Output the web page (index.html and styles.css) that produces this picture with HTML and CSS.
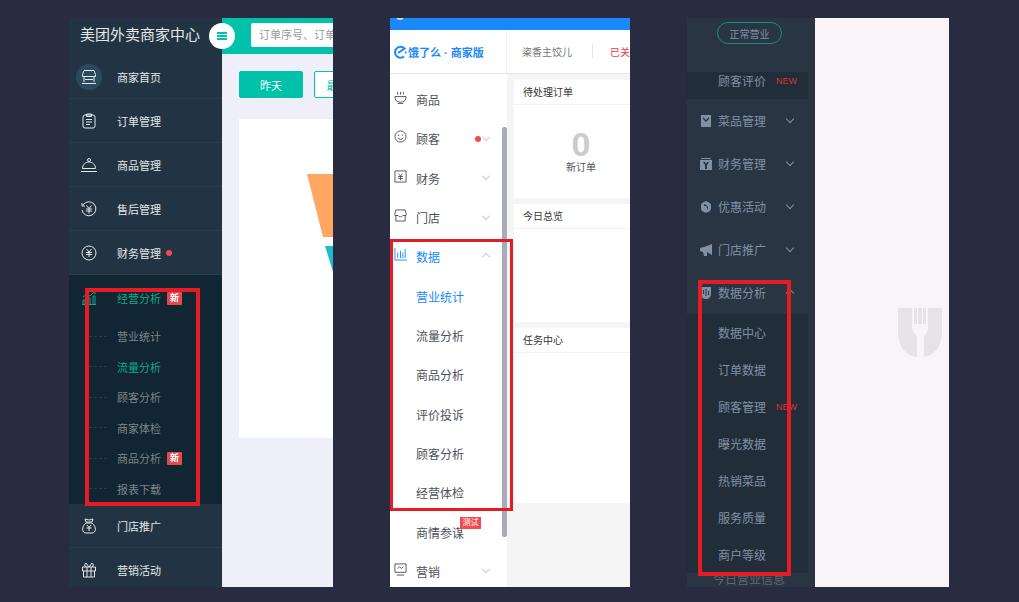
FILE: index.html
```
<!DOCTYPE html>
<html lang="zh-CN">
<head>
  <meta charset="UTF-8">
  <title>商家后台对比</title>
  <meta name="viewport" content="width=device-width, initial-scale=1.0">
  <link rel="stylesheet" href="styles.css">
</head>
<body>
  <!-- 美团 -->
  <section class="panel meituan">
    <aside class="mt-side">
      <h2>美团外卖商家中心</h2>
      <ul class="mt-menu">
        <li><a href="#"><span class="icon home"><svg viewBox="0 0 16 16"><path d="M3 1.500h10l1.500 4v2h-13v-2zM3 8v5M13 8v5M1 14.500h14M4 10.500h8"/></svg></span>商家首页</a></li>
        <li><a href="#"><span class="icon"><svg viewBox="0 0 16 16"><rect x="2" y="2" width="12" height="13" rx="2"/><path d="M5.500 1v2.500h5V1zM5 6.500h6M5 9h6M5 11.500h4"/></svg></span>订单管理</a></li>
        <li><a href="#"><span class="icon"><svg viewBox="0 0 16 16"><path d="M1.500 11.500c0-4 3-6.500 6.500-6.500s6.500 2.500 6.500 6.500zM0 14.500h16"/><circle cx="8" cy="3" r="1.500"/></svg></span>商品管理</a></li>
        <li><a href="#"><span class="icon"><svg viewBox="0 0 16 16"><path d="M2 4a7 7 0 1 1-1 5M1 2v3h3M5.500 4.500L8 7.500l2.500-3M5 8h6M5 10h6M8 7.500v5"/></svg></span>售后管理</a></li>
        <li><a href="#"><span class="icon"><svg viewBox="0 0 16 16"><circle cx="8" cy="8" r="7"/><path d="M5.500 4L8 7l2.500-3M5 7.500h6M5 9.500h6M8 7v5"/></svg></span>财务管理<i class="dot"></i></a></li>
        <li class="open">
          <a href="#" class="current"><span class="icon"><svg viewBox="0 0 16 16"><path d="M2 14v-4h2v4M7 14V8h2v6M12 14V6h2v8M1 14.500h14M2 7l4-3 3 2 4-4M10 1.500h4v3"/></svg></span>经营分析<b class="new">新</b></a>
          <ul class="mt-sub">
            <li><a href="#">营业统计</a></li>
            <li><a href="#" class="current">流量分析</a></li>
            <li><a href="#">顾客分析</a></li>
            <li><a href="#">商家体检</a></li>
            <li><a href="#">商品分析<b class="new">新</b></a></li>
            <li><a href="#">报表下载</a></li>
          </ul>
        </li>
        <li><a href="#"><span class="icon"><svg viewBox="0 0 16 16"><path d="M5 4L4 1l4 1 4-1-1 3zM5 5C0 9 1 15 5 15h6c4 0 5-6 0-10zM6 7l2 2.500L10 7M5.500 10h5M8 9.500V13"/></svg></span>门店推广</a></li>
        <li><a href="#"><span class="icon"><svg viewBox="0 0 16 16"><path d="M1.500 5h13v4h-13zM2.500 9v6h11V9M6 5v10M10 5v10M8 5L5 1 3.500 3 5 5M8 5l3-4 1.500 2L11 5"/></svg></span>营销活动</a></li>
      </ul>
    </aside>
    <div class="mt-main">
      <header>
        <button class="fold" aria-label="收起菜单"><svg viewBox="0 0 10 10"><path d="M0 2h10M0 5h10M0 8h10"/></svg></button>
        <input type="text" placeholder="订单序号、订单" aria-label="搜索订单">
      </header>
      <div class="days">
        <button class="active">昨天</button>
        <button>最近7天</button>
      </div>
      <div class="chart">
        <svg viewBox="0 0 94 319"><path fill="#ffa661" d="M68 55h26v63H84z"/><path fill="#20bccb" d="M86 127h8v26z"/></svg>
      </div>
    </div>
    <div class="mark"></div>
  </section>

  <!-- 饿了么 -->
  <section class="panel eleme">
    <div class="el-bar"><i></i></div>
    <header class="el-head">
      <h2><svg viewBox="0 0 14 14"><path d="M11 11.500A5.500 5.500 0 1 1 11.500 3.500L5 8"/><path d="M12 7.500h1.500"/></svg>饿了么 · 商家版</h2>
      <div class="shop"><span>粢香主饺儿</span><span class="state">已关</span></div>
    </header>
    <div class="el-body">
      <nav>
        <ul>
          <li><a href="#"><svg viewBox="0 0 14 14"><path d="M1 6h12c0 4-2 6-6 6S1 10 1 6zM4 1v3M7 1v3M10 1v3M4 13.500h6"/></svg>商品</a></li>
          <li><a href="#"><svg viewBox="0 0 14 14"><circle cx="7" cy="7" r="6"/><path d="M5 5v1.500M9 5v1.500M4 8.500c1.500 2 4.500 2 6 0"/></svg>顾客<i class="dot"></i><span class="arrow down"></span></a></li>
          <li><a href="#"><svg viewBox="0 0 14 14"><path d="M1 1h12v12H1zM5 4l2 2.500L9 4M4.500 7h5M4.500 9h5M7 6.500V11"/></svg>财务<span class="arrow down"></span></a></li>
          <li><a href="#"><svg viewBox="0 0 14 14"><path d="M2 1h10l1 4v2H9.500c-1 2-4 2-5 0H1V5zM2 7v6h10V7"/></svg>门店<span class="arrow down"></span></a></li>
          <li><a href="#" class="current"><svg viewBox="0 0 14 14"><path d="M1 0v13h13M4 5v6M7 3v8M9.500 5v6M12 1v10"/></svg>数据<span class="arrow up"></span></a></li>
          <li class="sub"><a href="#" class="current">营业统计</a></li>
          <li class="sub"><a href="#">流量分析</a></li>
          <li class="sub"><a href="#">商品分析</a></li>
          <li class="sub"><a href="#">评价投诉</a></li>
          <li class="sub"><a href="#">顾客分析</a></li>
          <li class="sub"><a href="#">经营体检</a></li>
          <li class="sub"><a href="#">商情参谋<b class="test">测试</b></a></li>
          <li><a href="#"><svg viewBox="0 0 14 14"><path d="M1 1h12v9H1zM4 6l2-2 2 2 2-2M3 13h8"/></svg>营销<span class="arrow down"></span></a></li>
        </ul>
        <div class="thumb"></div>
      </nav>
      <main>
        <div class="card">
          <h3>待处理订单</h3>
          <div class="count"><strong>0</strong><span>新订单</span></div>
        </div>
        <div class="card"><h3>今日总览</h3></div>
        <div class="card tasks"><h3>任务中心</h3></div>
      </main>
    </div>
    <div class="mark"></div>
  </section>

  <!-- 百度外卖 -->
  <section class="panel baidu">
    <aside class="bd-side">
      <div class="bd-status"><button>正常营业</button></div>
      <ul class="bd-menu">
        <li class="review"><a href="#">顾客评价<em>NEW</em></a></li>
        <li><a href="#"><svg viewBox="0 0 12 12"><path fill-rule="evenodd" d="M1 0h10v12H1zM3 2v2l3 3 3-3V2L6 5z"/></svg>菜品管理<span class="arrow down"></span></a></li>
        <li><a href="#"><svg viewBox="0 0 12 12"><path fill-rule="evenodd" d="M1 0h10v1H1zM0 2h12v10H0zM3 4l2 3v4h2V7l2-3H7L6 6 5 4z"/></svg>财务管理<span class="arrow down"></span></a></li>
        <li><a href="#"><svg viewBox="0 0 12 12"><path fill-rule="evenodd" d="M6 0l2 1 2 1 1 2v4l-1 2-4 2-4-2-1-2V4l1-2 2-1zM4 3v2h2l2 4V6L6 4z"/></svg>优惠活动<span class="arrow down"></span></a></li>
        <li><a href="#"><svg viewBox="0 0 12 12"><path d="M12 0v11L7 8v4H4L3 8 0 7V4l4-1z"/></svg>门店推广<span class="arrow down"></span></a></li>
        <li><a href="#"><svg viewBox="0 0 12 12"><path fill-rule="evenodd" d="M1 0h10v6c0 4-2 6-5 6S1 10 1 6zM3 3v4h1V3zM5.500 2v7h1V2zM8 4v4h1V4z"/></svg>数据分析<span class="arrow up"></span></a>
          <ul class="bd-sub">
            <li><a href="#">数据中心</a></li>
            <li><a href="#">订单数据</a></li>
            <li><a href="#">顾客管理<em>NEW</em></a></li>
            <li><a href="#">曝光数据</a></li>
            <li><a href="#">热销菜品</a></li>
            <li><a href="#">服务质量</a></li>
            <li><a href="#">商户等级</a></li>
          </ul>
        </li>
      </ul>
      <p>今日营业信息</p>
    </aside>
    <div class="bd-main">
      <svg viewBox="0 0 44 50"><path fill="#e5e3e6" d="M0 0h44v24c0 14-6 23-22 26C6 47 0 38 0 24z"/><path fill="#f9f4f8" d="M14 0h2v16h3V0h1v16h4V0h1v16h3V0h2v20c0 5-4 6-4 10v20h-7V30c0-4-5-5-5-10z"/></svg>
    </div>
    <div class="mark"></div>
  </section>
</body>
</html>
```
FILE: styles.css
```
* {
  box-sizing: border-box;
}
body {
  margin: 0;
  padding: 18px 70px 15px 69px;
  height: 100vh;
  display: grid;
  grid-template-columns: 264fr 240fr 262fr;
  grid-template-rows: minmax(0, 1fr);
  gap: 57px;
  background: #292c41;
  font-family: "Liberation Sans", "Noto Sans CJK SC", sans-serif;
  font-size: 12px;
}
ul {
  list-style: none;
  margin: 0;
  padding: 0;
}
h2, h3, p {
  margin: 0;
  font-weight: normal;
}
a {
  color: inherit;
  text-decoration: none;
  display: flex;
  align-items: center;
  height: 100%;
  white-space: nowrap;
}
button, input {
  font-family: inherit;
  padding: 0;
}
svg {
  display: block;
  fill: none;
  stroke: currentColor;
  flex: none;
}
.panel {
  position: relative;
  overflow: hidden;
}
/* 红框标注 */
.mark {
  position: absolute;
  border: 4px solid #e61c24;
}
.dot {
  width: 6px;
  height: 6px;
  border-radius: 50%;
  background: #f5494f;
}
.arrow {
  width: 6px;
  height: 6px;
  margin-bottom: 4px;
  border: solid currentColor;
  border-width: 0 1px 1px 0;
}
.arrow.down {
  transform: rotate(45deg);
}
.arrow.up {
  transform: rotate(225deg);
  margin-bottom: 0;
}

/* 美团 */
.meituan {
  display: flex;
  font-size: 11px;
}
.mt-side {
  width: 153px;
  flex: none;
  background: #223443;
  color: #e3e8ea;
}
.mt-side h2 {
  height: 37px;
  line-height: 34px;
  padding-left: 11px;
  font-size: 15px;
  white-space: nowrap;
}
.mt-menu > li > a {
  height: 44px;
  border-bottom: 1px solid #293c4b;
}
.icon {
  width: 26px;
  height: 26px;
  margin: 0 15px 0 7px;
  border-radius: 50%;
  display: grid;
  place-items: center;
}
.icon.home {
  background: #2c4a5e;
}
.icon svg {
  width: 16px;
  height: 16px;
}
.meituan .dot {
  margin-left: 5px;
}
.mt-menu .open {
  background: #122532;
}
.mt-menu .open > a {
  height: 46px;
  border: 0;
}
.mt-menu .current {
  color: #0fa88c;
}
.new {
  margin-left: 6px;
  width: 15px;
  height: 13px;
  line-height: 13px;
  border-radius: 1px;
  background: #e04a50;
  color: #fff;
  font-size: 9px;
  text-align: center;
}
.mt-sub {
  min-height: 183px;
  display: grid;
  grid-auto-rows: 1fr;
  color: #7b858c;
}
.mt-sub a::before {
  content: "";
  width: 18px;
  margin: 0 10px 0 20px;
  border-top: 1px dashed #2a3b45;
}
.mt-main {
  flex: 1;
  min-width: 0;
  background: #eeeff8;
}
.mt-main header {
  height: 36px;
  display: flex;
  align-items: center;
  background: #00c1aa;
}
.fold {
  width: 26px;
  height: 26px;
  flex: none;
  margin-left: -13px;
  border: 0;
  border-radius: 50%;
  background: #fff;
  color: #00c1aa;
  display: grid;
  place-items: center;
}
.fold svg {
  width: 10px;
  height: 10px;
  stroke-width: 2;
}
.mt-main input {
  flex: 1;
  min-width: 120px;
  height: 24px;
  margin: 0 0 2px 16px;
  padding-left: 8px;
  border: 0;
  border-radius: 2px;
  font-size: 11px;
}
.mt-main input::placeholder {
  color: #999;
}
.days {
  display: flex;
  gap: 11px;
  margin: 17px 0 21px 17px;
}
.days button {
  width: 64px;
  height: 27px;
  flex: none;
  border: 1px solid #00c1aa;
  border-radius: 2px;
  background: #fff;
  color: #00c1aa;
  font-size: 11px;
}
.days .active {
  background: #00c1aa;
  color: #fff;
}
.chart {
  margin-left: 17px;
  background: #fff;
}
.chart svg {
  width: 100%;
  height: 319px;
  stroke: none;
}
.meituan .mark {
  left: 16px;
  top: 270px;
  width: 115px;
  height: 218px;
}

/* 饿了么 */
.eleme {
  display: flex;
  flex-direction: column;
  background: #fff;
  color: #4d5259;
}
.el-bar {
  height: 12px;
  flex: none;
  padding-left: 6px;
  background: #1989fa;
  overflow: hidden;
}
.el-bar i {
  display: block;
  width: 8px;
  height: 8px;
  margin-top: -6px;
  border-radius: 50%;
  background: #cfe5fd;
}
.el-head {
  height: 44px;
  flex: none;
  display: flex;
  border-bottom: 1px solid #e6e6e6;
}
.el-head h2 {
  width: 117px;
  flex: none;
  padding-left: 3px;
  display: flex;
  align-items: center;
  gap: 1px;
  border-right: 1px solid #f2f2f2;
  color: #1989fa;
  font-size: 11px;
  font-weight: bold;
  white-space: nowrap;
}
.el-head svg {
  width: 14px;
  height: 14px;
  stroke-width: 2;
}
.shop {
  display: flex;
  align-items: center;
  padding-left: 15px;
  font-size: 10px;
  color: #777;
  white-space: nowrap;
}
.shop .state {
  margin-left: 20px;
  padding-left: 17px;
  border-left: 1px solid #e6e6e6;
  color: #f0383e;
}
.el-body {
  flex: 1;
  min-height: 0;
  display: flex;
}
.el-body nav {
  width: 117px;
  flex: none;
  padding-top: 6px;
  position: relative;
}
.el-body ul {
  min-height: 511px;
  display: grid;
  grid-auto-rows: 1fr;
}
.el-body a {
  padding: 0 18px 0 4px;
}
.el-body a svg {
  width: 13px;
  height: 13px;
  margin: -4px 9px 0 0;
}
.el-body .sub a {
  padding-left: 26px;
}
.el-body .current {
  color: #1989fa;
}
.el-body .arrow {
  margin-left: auto;
  color: #ccc;
}
.el-body .dot {
  margin-left: auto;
}
.el-body .dot + .arrow {
  margin-left: 2px;
}
.test {
  width: 21px;
  height: 12px;
  line-height: 12px;
  margin: -18px 0 0 -4px;
  background: #f5494f;
  color: #fff;
  font-size: 8px;
  font-weight: normal;
  text-align: center;
}
.thumb {
  position: absolute;
  top: 53px;
  right: 0;
  width: 5px;
  height: 410px;
  border-radius: 2px;
  background: #a9abb8;
}
.el-body main {
  flex: 1;
  min-width: 0;
  padding: 6px 0 0 7px;
  background: #f5f5f5;
}
.card {
  min-height: 118px;
  margin-bottom: 6px;
  background: #fff;
}
.card.tasks {
  min-height: 175px;
}
.card h3 {
  height: 25px;
  line-height: 26px;
  padding-left: 9px;
  border-bottom: 1px solid #f2f2f2;
  font-size: 10px;
  color: #333;
}
.count {
  width: 134px;
  padding-top: 21px;
  display: flex;
  flex-direction: column;
  align-items: center;
  font-size: 10px;
  line-height: 12px;
}
.count strong {
  font-size: 34px;
  line-height: 36px;
  color: #ccc;
}
.eleme .mark {
  left: 0;
  top: 221px;
  width: 123px;
  height: 272px;
  border-width: 3px;
}

/* 百度外卖 */
.baidu {
  display: flex;
}
.bd-side {
  width: 128px;
  flex: none;
  padding-right: 7px;
  background: #293542;
  color: #8191a5;
}
.bd-status {
  height: 54px;
  padding: 4px 0 0 30px;
}
.bd-status button {
  width: 65px;
  height: 22px;
  border: 1px solid #1a8f7c;
  border-radius: 11px;
  background: none;
  color: #8191a5;
  font-size: 10px;
}
.bd-menu > li > a {
  height: 43px;
  padding-left: 13px;
}
.bd-menu a svg {
  width: 12px;
  height: 12px;
  margin-right: 6px;
  fill: currentColor;
  stroke: none;
}
.bd-menu > .review > a {
  height: 27px;
  padding: 0 0 10px 31px;
  background: #222d3a;
}
.bd-menu em {
  margin-left: 10px;
  color: #d8343c;
  font-size: 9px;
  font-style: normal;
}
.bd-menu .arrow {
  margin-left: 21px;
}
.bd-sub {
  background: #222d3a;
}
.bd-sub a {
  height: 37px;
  padding-left: 31px;
}
.bd-side p {
  padding-left: 26px;
  line-height: 14px;
  color: #5a6877;
  white-space: nowrap;
}
.bd-main {
  flex: 1;
  padding: 290px 7px 0 0;
  background: #f9f4f8;
}
.bd-main svg {
  width: 44px;
  height: 50px;
  margin-left: auto;
  stroke: none;
}
.baidu .mark {
  left: 11px;
  top: 262px;
  width: 93px;
  height: 296px;
}
```
